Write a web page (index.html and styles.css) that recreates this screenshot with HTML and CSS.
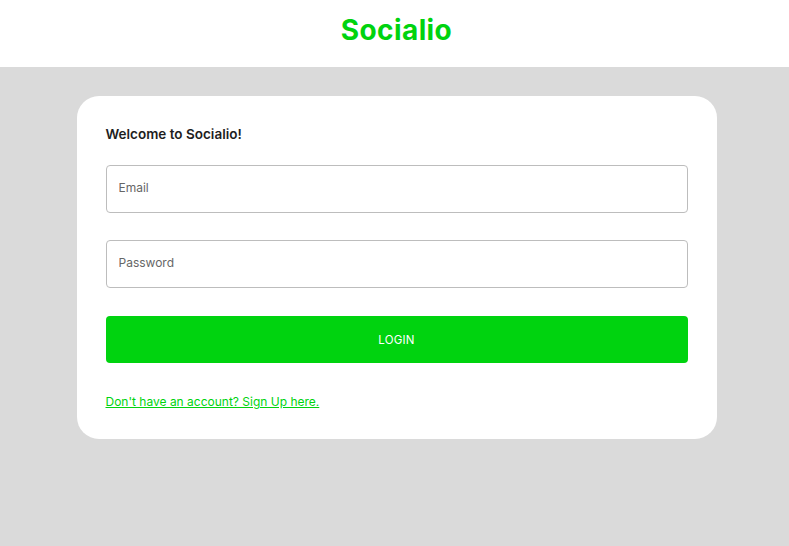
FILE: index.html
```html
<!DOCTYPE html>
<html>
<head>
<meta charset="utf-8">
<link rel="stylesheet" href="styles.css">
</head>
<body>
<header class="topbar"><h1 class="brand">Socialio</h1></header>
<main class="page">
  <section class="card">
    <h2 class="welcome">Welcome to Socialio!</h2>
    <div class="field"><input class="input" type="email" placeholder="Email"></div>
    <div class="field"><input class="input" type="password" placeholder="Password"></div>
    <button class="btn">LOGIN</button>
    <a class="link" href="#">Don't have an account? Sign Up here.</a>
  </section>
</main>
</body>
</html>
```
FILE: styles.css
```css
* { box-sizing: border-box; }
html, body { margin: 0; height: 100%; }
body {
  font-family: "Inter", "Noto Sans", sans-serif;
  background: #dadada;
  color: #222;
}
.topbar {
  background: #fff;
  height: 67px;
  display: flex;
  align-items: center;
  justify-content: center;
}
.brand {
  margin: 0;
  font-size: 28px;
  font-weight: 700;
  color: #00d30f;
  letter-spacing: 0.4px;
  padding: 0 0 8px 4px;
}
.page {
  padding-top: 29px;
  padding-left: 4px;
  display: flex;
  justify-content: center;
}
.card {
  width: 640px;
  background: #fff;
  border-radius: 22px;
  padding: 28px 29px 29px;
  display: flex;
  flex-direction: column;
}
.welcome {
  margin: 0;
  font-size: 13.5px;
  font-weight: 600;
  line-height: 20px;
  color: #1e1e1e;
}
.field { margin-top: 21px; }
.field + .field { margin-top: 27px; }
.input {
  display: block;
  width: 100%;
  height: 48px;
  border: 1px solid #bdbdbd;
  border-radius: 4px;
  padding: 0 12px 3px;
  font-family: inherit;
  font-size: 12px;
  color: #333;
  outline: none;
}
.input::placeholder { color: #666; }
.btn {
  margin-top: 28px;
  height: 47px;
  border: none;
  border-radius: 4px;
  background: #00d30f;
  color: #fff;
  font-family: inherit;
  font-size: 11.5px;
  letter-spacing: 0.2px;
}
.link {
  margin-top: 31px;
  align-self: flex-start;
  color: #00d30f;
  font-size: 12px;
  line-height: 16px;
  text-decoration: underline;
}
```
